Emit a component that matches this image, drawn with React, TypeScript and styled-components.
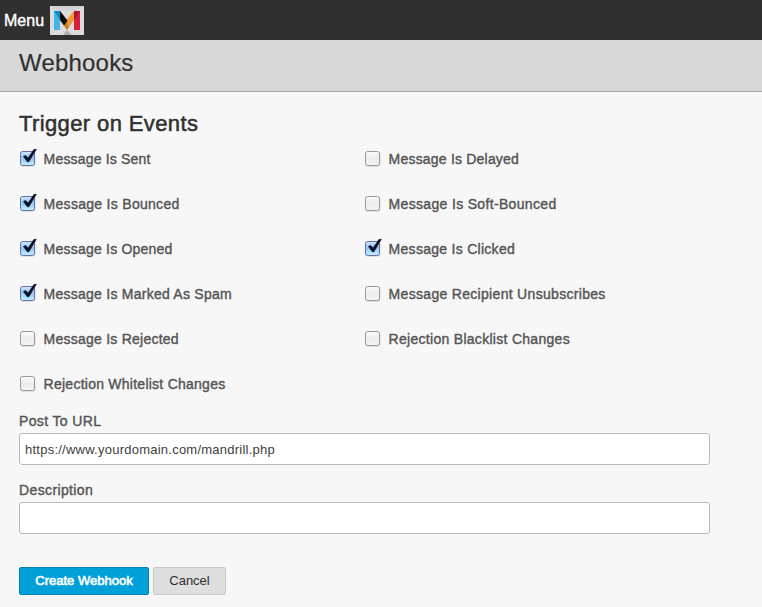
import React from "react";
import styled, { createGlobalStyle } from "styled-components";

const GlobalStyle = createGlobalStyle`
  * { box-sizing: border-box; }
  body {
    margin: 0;
    background: #f7f7f7;
    font-family: "Liberation Sans", Arial, Helvetica, sans-serif;
    color: #333;
    overflow: hidden;
  }
`;

const Page = styled.div`
  width: 762px;
  height: 607px;
  display: flex;
  flex-direction: column;
  background: #f7f7f7;
`;

const TopBar = styled.header`
  height: 40px;
  flex: none;
  display: flex;
  align-items: center;
  padding-left: 4px;
  background: #303030;
`;

const MenuLabel = styled.span`
  width: 46px;
  padding-top: 1px;
  font-size: 16px;
  line-height: 20px;
  color: #fff;
  white-space: nowrap;
  -webkit-text-stroke: 0.4px #fff;
`;

const TitleBar = styled.div`
  height: 52px;
  flex: none;
  padding: 8px 19px 0;
  background: #d8d8d8;
  border-bottom: 1px solid #a2a2a2;
`;

const PageTitle = styled.h1`
  margin: 0;
  font-size: 24px;
  line-height: 30px;
  font-weight: 400;
  color: #303030;
  letter-spacing: 0.2px;
  -webkit-text-stroke: 0.2px #303030;
`;

const Form = styled.main`
  padding: 18px 0 0 19px;
`;

const SectionTitle = styled.h2`
  margin: 0;
  font-size: 22px;
  line-height: 28px;
  font-weight: 400;
  color: #303030;
  letter-spacing: 0.38px;
  -webkit-text-stroke: 0.5px #303030;
`;

const EventGrid = styled.div`
  display: grid;
  grid-template-columns: 345px 345px;
  grid-auto-rows: 45px;
  margin-bottom: 3px;
`;

const EventLabel = styled.label`
  display: flex;
  align-items: flex-start;
  padding-top: 6px;
`;

const EventText = styled.span<{ $tracking: number }>`
  margin: 5px 0 0 4.6px;
  font-size: 14px;
  line-height: 20px;
  letter-spacing: ${(p) => p.$tracking}px;
  color: #555;
  white-space: nowrap;
  -webkit-text-stroke: 0.4px #555;
`;

const FieldGroup = styled.div`
  height: 69px;
`;

const FieldLabel = styled.label`
  display: block;
  height: 22px;
  font-size: 14px;
  line-height: 20px;
  letter-spacing: 0.37px;
  color: #555;
  -webkit-text-stroke: 0.4px #555;
`;

const TextField = styled.input`
  display: block;
  width: 691px;
  height: 32px;
  padding: 1px 5px 0;
  border: 1px solid #bbb;
  border-radius: 3px;
  background: #fff;
  color: #404040;
  font: 13px "Liberation Sans", Arial, sans-serif;
  letter-spacing: 0.24px;
  outline: none;
`;

const Actions = styled.div`
  display: flex;
  gap: 4px;
  padding-top: 18px;
`;

const Button = styled.button<{ $primary?: boolean }>`
  width: ${(p) => (p.$primary ? 130 : 73)}px;
  height: 28px;
  padding: 0 0 1px;
  border: 1px solid ${(p) => (p.$primary ? "#0083b5" : "#c8c8c8")};
  border-radius: 2px;
  background: ${(p) => (p.$primary ? "#00a1d9" : "#dedede")};
  color: ${(p) => (p.$primary ? "#fff" : "#303030")};
  font: 13px "Liberation Sans", Arial, sans-serif;
  white-space: nowrap;
  -webkit-text-stroke: ${(p) => (p.$primary ? "0.6px #fff" : "0")};
`;

const Logo = () => (
  <svg width="34" height="29" viewBox="0 0 34 29">
    <rect width="34" height="29" fill="#dcdcdc" />
    <path d="M0 0H34L27 5H5L0 0Z" fill="#d4d4d4" />
    <path d="M4 5H10V24H4Z" fill="#43b4e4" />
    <path d="M4 5H10V14Z" fill="#078fc5" />
    <path d="M24 5H30V24H24Z" fill="#d51f3c" />
    <path d="M24 5H30L24 14Z" fill="#a8162f" />
    <path d="M24 5V14L17 24L13 18Z" fill="#f39a38" />
    <path d="M13.5 18.5L17 14L18.5 21.5L17 24Z" fill="#c77a27" />
    <path d="M10 5L17.5 14.5L14 19.5L10 14Z" fill="#090909" />
    <path d="M17 24L21.5 29H13Z" fill="#b0b0b0" />
  </svg>
);

const CheckIcon = ({ checked }: { checked: boolean }) => (
  <svg width="20" height="24" viewBox="0 0 20 24">
    <defs>
      <linearGradient id="checkedFill" x1="0" y1="0" x2="0" y2="1">
        <stop stopColor="#d2e7fa" />
        <stop offset="0.45" stopColor="#91c5f4" />
        <stop offset="1" stopColor="#c3efff" />
      </linearGradient>
      <linearGradient id="emptyFill" x1="0" y1="0" x2="0" y2="1">
        <stop stopColor="#fbfbfb" />
        <stop offset="0.5" stopColor="#ececec" />
        <stop offset="1" stopColor="#f3f3f3" />
      </linearGradient>
    </defs>
    <rect x="1" y="7.8" width="15.5" height="15" rx="3" fill="#000" opacity="0.12" />
    <rect
      x="1.5"
      y="7.5"
      width="14"
      height="14"
      rx="2.2"
      fill={checked ? "url(#checkedFill)" : "url(#emptyFill)"}
      stroke={checked ? "#6870aa" : "#9a9a9a"}
    />
    {checked && (
      <path
        d="M4.4 12.4L6.7 11.4L9.1 14.1L14.8 5.6L17.4 5.2L9.9 17.8H8.3Z"
        fill="#07102b"
        stroke="#07102b"
        strokeWidth="0.6"
      />
    )}
  </svg>
);

const events = [
  { name: "Message Is Sent", checked: true, tracking: 0.18 },
  { name: "Message Is Delayed", checked: false, tracking: 0.2 },
  { name: "Message Is Bounced", checked: true, tracking: 0.29 },
  { name: "Message Is Soft-Bounced", checked: false, tracking: 0.33 },
  { name: "Message Is Opened", checked: true, tracking: 0.22 },
  { name: "Message Is Clicked", checked: true, tracking: 0.28 },
  { name: "Message Is Marked As Spam", checked: true, tracking: 0.25 },
  { name: "Message Recipient Unsubscribes", checked: false, tracking: 0.31 },
  { name: "Message Is Rejected", checked: false, tracking: 0.24 },
  { name: "Rejection Blacklist Changes", checked: false, tracking: 0.29 },
  { name: "Rejection Whitelist Changes", checked: false, tracking: 0.25 },
];

export default function App() {
  return (
    <Page>
      <GlobalStyle />
      <TopBar>
        <MenuLabel>Menu</MenuLabel>
        <Logo />
      </TopBar>
      <TitleBar>
        <PageTitle>Webhooks</PageTitle>
      </TitleBar>
      <Form>
        <SectionTitle>Trigger on Events</SectionTitle>
        <EventGrid>
          {events.map((event) => (
            <EventLabel key={event.name}>
              <CheckIcon checked={event.checked} />
              <EventText $tracking={event.tracking}>{event.name}</EventText>
            </EventLabel>
          ))}
        </EventGrid>
        <FieldGroup>
          <FieldLabel htmlFor="url">Post To URL</FieldLabel>
          <TextField id="url" defaultValue="https://www.yourdomain.com/mandrill.php" />
        </FieldGroup>
        <FieldGroup>
          <FieldLabel htmlFor="description">Description</FieldLabel>
          <TextField id="description" />
        </FieldGroup>
        <Actions>
          <Button $primary>Create Webhook</Button>
          <Button>Cancel</Button>
        </Actions>
      </Form>
    </Page>
  );
}
